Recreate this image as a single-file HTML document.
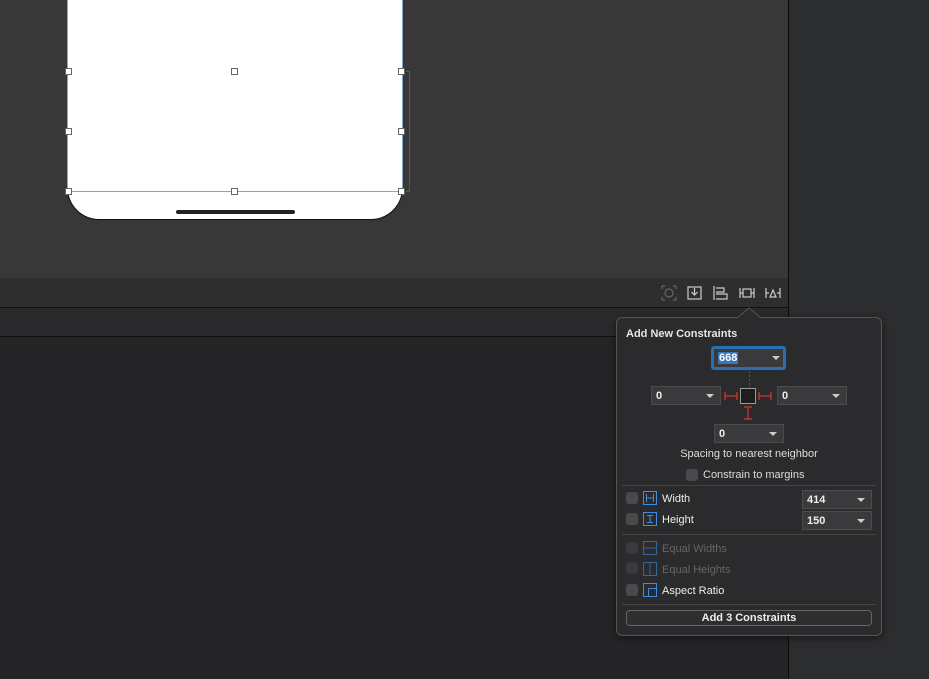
<!DOCTYPE html><html><head><style>
*{margin:0;padding:0;box-sizing:border-box}
body{width:929px;height:679px;overflow:hidden;background:#252528;font-family:"Liberation Sans",sans-serif;position:relative}
.a{position:absolute}
.h{position:absolute;width:7px;height:7px;background:#fff;border:1px solid #666}
.t{color:#e6e6e6;font-size:11px;font-weight:bold}
.dd{position:absolute;background:#3a3a3c;border:1px solid #4c4c4e;height:19px;color:#eee;font-size:11px;font-weight:bold;padding:3px 4px 0}
.dd:after{content:"";position:absolute;right:6px;top:7px;border:4px solid transparent;border-top:4px solid #ccc}
.cb{position:absolute;width:12px;height:12px;background:#4a4a4c;border-radius:3px}
.ic{position:absolute;width:14px;height:14px;border:1px solid #3b8ee0;border-radius:1px}
</style></head><body>
<div class="a" style="left:0;top:0;width:788px;height:278px;background:#383838"></div>
<div class="a" style="left:0;top:278px;width:788px;height:29px;background:#2e2e2e"></div>
<div class="a" style="left:0;top:307px;width:788px;height:1px;background:#111"></div>
<div class="a" style="left:0;top:308px;width:788px;height:28px;background:#2a2a2c"></div>
<div class="a" style="left:0;top:336px;width:788px;height:1px;background:#111"></div>
<div class="a" style="left:788px;top:0;width:1px;height:679px;background:#0c0c0c"></div>
<div class="a" style="left:789px;top:0;width:140px;height:679px;background:#2c2d2f"></div>
<!-- phone -->
<div class="a" style="left:67px;top:-20px;width:336px;height:240px;background:#fff;border:1px solid #111;border-top:none;border-radius:0 0 32px 32px"></div>
<div class="a" style="left:67px;top:-5px;width:336px;height:197px;border:1px solid #7fa6d0;border-top:none"></div>
<div class="a" style="left:176px;top:210px;width:119px;height:4px;background:#222;border-radius:2px"></div>
<div class="a" style="left:406px;top:71px;width:4px;height:121px;border:1px solid #3a5f8a;border-left:none"></div>
<div class="h" style="left:65px;top:68px"></div><div class="h" style="left:231px;top:68px"></div><div class="h" style="left:398px;top:68px"></div>
<div class="h" style="left:65px;top:128px"></div><div class="h" style="left:398px;top:128px"></div>
<div class="h" style="left:65px;top:188px"></div><div class="h" style="left:231px;top:188px"></div><div class="h" style="left:398px;top:188px"></div>
<!-- toolbar icons -->
<svg class="a" style="left:660px;top:284px" width="125" height="18" fill="none" stroke-width="1.2">
<g stroke="#666"><path d="M2 2h3M2 2v3M16 2h-3M16 2v3M2 16h3M2 16v-3M16 16h-3M16 16v-3"/><circle cx="9" cy="9" r="4"/></g>
<g stroke="#ccc"><rect x="28" y="3" width="13" height="12"/><path d="M34.5 4v7M31.5 8l3 3 3-3"/>
<path d="M54 2v14M56 4h8v4h-8M56 10h11v5h-11"/>
<path d="M80 4v10M94 4v10M80 9h3M91 9h3"/><rect x="83" y="5" width="8" height="8"/>
<path d="M106 4v10M120 4v10M106 9h3M117 9h3M110 13l3-7 3 7z"/></g></svg>
<!-- popover -->
<div class="a" style="left:616px;top:317px;width:266px;height:319px;background:#2b2b2d;border:1px solid #555;border-radius:6px;box-shadow:0 2px 8px rgba(0,0,0,.5)"></div>
<svg class="a" style="left:737px;top:307px" width="24" height="12"><path d="M0 11L12 1 24 11" fill="#2b2b2d" stroke="#555"/><rect x="1" y="11" width="22" height="2" fill="#2b2b2d"/></svg>
<div class="a t" style="left:626px;top:328px">Add New Constraints</div>
<div class="a" style="left:711px;top:346px;width:75px;height:24px;border:3px solid #2a6fb0;border-radius:3px;background:#3a3a3c"></div>
<div class="a" style="left:718px;top:352px;background:#3b76b8;color:#fff;font-size:11px;font-weight:bold;padding:0 1px">668</div>
<div class="a" style="left:772px;top:356px;border:4px solid transparent;border-top:4px solid #ccc"></div>
<div class="dd" style="left:651px;top:386px;width:70px">0</div>
<div class="dd" style="left:777px;top:386px;width:70px">0</div>
<div class="dd" style="left:714px;top:424px;width:70px">0</div>
<svg class="a" style="left:720px;top:370px" width="60" height="52" fill="none">
<path d="M29.5 1v17" stroke="#a33" stroke-dasharray="2 2"/>
<rect x="20.5" y="18.5" width="15" height="15" fill="#1e1e1e" stroke="#999"/>
<path d="M5 22v8M5 26h12M17 22v8M39 26h12M39 22v8M51 22v8M24 37h8M28 37v12M24 49h8" stroke="#e0302a" stroke-width="1.2"/></svg>
<div class="a" style="left:616px;top:448px;width:266px;text-align:center;color:#ddd;font-size:11px">Spacing to nearest neighbor</div>
<div class="cb" style="left:686px;top:469px"></div>
<div class="a" style="left:703px;top:469px;color:#ddd;font-size:11px">Constrain to margins</div>
<div class="a" style="left:622px;top:485px;width:254px;height:1px;background:#444"></div>
<div class="cb" style="left:626px;top:492px"></div>
<svg class="a" style="left:643px;top:491px" width="14" height="14" fill="none" stroke="#3b8ee0"><rect x=".5" y=".5" width="13" height="13"/><path d="M3.5 3v8M10.5 3v8M3.5 7h7"/></svg>
<div class="a t" style="left:662px;top:493px;font-weight:normal;color:#eee">Width</div>
<div class="dd" style="left:802px;top:490px;width:70px">414</div>
<div class="cb" style="left:626px;top:513px"></div>
<svg class="a" style="left:643px;top:512px" width="14" height="14" fill="none" stroke="#3b8ee0"><rect x=".5" y=".5" width="13" height="13"/><path d="M4 3.5h6M4 10.5h6M7 3.5v7"/></svg>
<div class="a t" style="left:662px;top:514px;font-weight:normal;color:#eee">Height</div>
<div class="dd" style="left:802px;top:511px;width:70px">150</div>
<div class="a" style="left:622px;top:534px;width:254px;height:1px;background:#444"></div>
<div class="cb" style="left:626px;top:542px;opacity:.5"></div>
<svg class="a" style="left:643px;top:541px;opacity:.6" width="14" height="14" fill="none" stroke="#3b8ee0"><rect x=".5" y=".5" width="13" height="13"/><path d="M1 7h12"/></svg>
<div class="a" style="left:662px;top:543px;color:#666;font-size:11px">Equal Widths</div>
<div class="cb" style="left:626px;top:562px;opacity:.5"></div>
<svg class="a" style="left:643px;top:562px;opacity:.6" width="14" height="14" fill="none" stroke="#3b8ee0"><rect x=".5" y=".5" width="13" height="13"/><path d="M7 1v12"/></svg>
<div class="a" style="left:662px;top:564px;color:#666;font-size:11px">Equal Heights</div>
<div class="cb" style="left:626px;top:584px"></div>
<svg class="a" style="left:643px;top:583px" width="14" height="14" fill="none" stroke="#3b8ee0"><rect x=".5" y=".5" width="13" height="13"/><path d="M5.5 13V5.5H13"/></svg>
<div class="a" style="left:662px;top:585px;color:#eee;font-size:11px">Aspect Ratio</div>
<div class="a" style="left:622px;top:604px;width:254px;height:1px;background:#444"></div>
<div class="a" style="left:626px;top:610px;width:246px;height:16px;border:1px solid #666;border-radius:4px;background:#2e2e30;color:#eee;font-size:11px;font-weight:bold;text-align:center;line-height:14px">Add 3 Constraints</div>
</body></html>
